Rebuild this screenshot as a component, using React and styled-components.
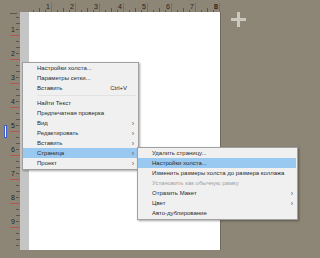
import React from 'react';
import styled, { createGlobalStyle } from 'styled-components';

const GlobalStyle = createGlobalStyle`
  html, body {
    margin: 0;
    padding: 0;
    background: #8d8676;
    overflow: hidden;
  }
`;

const Workspace = styled.div`
  position: relative;
  width: 320px;
  height: 258px;
  display: grid;
  grid-template-columns: 20px 200px 1fr;
  grid-template-rows: 12px 238px 1fr;
  background: #8d8676;
  font-family: 'Liberation Sans', Arial, sans-serif;
`;

const Corner = styled.div``;

const RulerSvg = styled.svg`
  display: block;
`;

const Page = styled.div`
  display: flex;
  box-shadow: 1px 0 0 rgba(60, 55, 45, 0.35);
`;

const PageGutter = styled.div`
  width: 9px;
  background: #c5c5c5;
`;

const PageSheet = styled.div`
  flex: 1;
  background: #ffffff;
`;

const Side = styled.div`
  padding: 0 0 0 11px;
`;

const Menu = styled.div`
  position: absolute;
  left: ${(p) => p.$left}px;
  top: ${(p) => p.$top}px;
  width: ${(p) => p.$width}px;
  box-sizing: border-box;
  background: #f0f0f0;
  border: 1px solid #a0a0a0;
  padding: 0 0 1px;
  box-shadow: 1px 1px 2px rgba(0, 0, 0, 0.35);
  font-size: 6px;
  color: #2a2a2a;
`;

const Item = styled.div`
  display: flex;
  align-items: center;
  height: 10px;
  margin: 0 1px 0 0;
  padding: 0 3px 0 14px;
  background: ${(p) => (p.$active ? '#99c8f1' : 'transparent')};
  color: ${(p) => (p.$disabled ? '#a0a0a0' : '#2a2a2a')};
  white-space: nowrap;
`;

const Label = styled.span`
  flex: 1;
`;

const Shortcut = styled.span`
  margin-right: 2px;
`;

const Arrow = styled.span`
  width: 5px;
  text-align: right;
  font-size: 7px;
  line-height: 7px;
  color: #555;
`;

const Separator = styled.div`
  height: 1px;
  margin: 2px 2px 2px 14px;
  background: #e2e2e2;
`;

const TopRuler = () => {
  const origin = 7;
  const ticks = [];
  for (let k = 1; k * 6 + origin < 200; k++) {
    const x = origin + k * 6;
    const major = k % 4 === 0;
    if (major) {
      ticks.push(<line key={'t' + k} x1={x + 0.5} y1={3} x2={x + 0.5} y2={12} stroke="#b4554f" />);
      ticks.push(
        <text key={'n' + k} x={x - 1} y={9} fontSize="7" textAnchor="end" fill="#262420" fontFamily="Liberation Sans, sans-serif">
          {k / 4}
        </text>
      );
    } else {
      const h = k % 2 === 0 ? 4 : 2;
      ticks.push(<line key={'t' + k} x1={x + 0.5} y1={12 - h} x2={x + 0.5} y2={12} stroke="#5b554a" />);
    }
  }
  return (
    <RulerSvg width="200" height="12" viewBox="0 0 200 12">
      {ticks}
      <text x="198" y="9" fontSize="7" textAnchor="end" fill="#262420" fontFamily="Liberation Sans, sans-serif">8</text>
    </RulerSvg>
  );
};

const LeftRuler = () => {
  const origin = -1;
  const ticks = [];
  for (let k = 1; k * 6 + origin < 238; k++) {
    const y = origin + k * 6;
    const major = k % 4 === 0;
    if (major) {
      ticks.push(<line key={'t' + k} x1={10} y1={y + 0.5} x2={20} y2={y + 0.5} stroke="#b4554f" />);
      ticks.push(
        <text key={'n' + k} x={15} y={y - 3} fontSize="7" textAnchor="end" fill="#262420" fontFamily="Liberation Sans, sans-serif">
          {k / 4}
        </text>
      );
    } else {
      const w = k % 2 === 0 ? 4 : 3;
      ticks.push(<line key={'t' + k} x1={16} y1={y + 0.5} x2={16 + w} y2={y + 0.5} stroke="#5b554a" />);
    }
  }
  return (
    <RulerSvg width="20" height="238" viewBox="0 0 20 238">
      <line x1="10" y1="1.5" x2="17" y2="1.5" stroke="#5b554a" />
      {ticks}
      <rect x="4.5" y="113.5" width="2" height="12" fill="#ffffff" stroke="#3d5cc8" />
    </RulerSvg>
  );
};

const PlusIcon = () => (
  <svg width="15" height="15" viewBox="0 0 15 15">
    <rect x="6" y="0" width="3" height="15" fill="#cdc8bf" />
    <rect x="0" y="6" width="15" height="3" fill="#cdc8bf" />
  </svg>
);

const mainMenu = [
  { label: 'Настройки холста...' },
  { label: 'Параметры сетки...' },
  { label: 'Вставить', shortcut: 'Ctrl+V' },
  { sep: true },
  { label: 'Найти Текст' },
  { label: 'Предпечатная проверка' },
  { label: 'Вид', sub: true },
  { label: 'Редактировать', sub: true },
  { label: 'Вставить', sub: true },
  { label: 'Страница', sub: true, active: true },
  { label: 'Проект', sub: true },
];

const pageMenu = [
  { label: 'Удалить страницу...' },
  { label: 'Настройки холста...', active: true },
  { label: 'Изменить размеры холста до размера коллажа' },
  { label: 'Установить как обычную рамку', disabled: true },
  { label: 'Отразить Макет', sub: true },
  { label: 'Цвет', sub: true },
  { label: 'Авто-дублирование' },
];

const renderItems = (items) =>
  items.map((it, i) =>
    it.sep ? (
      <Separator key={i} />
    ) : (
      <Item key={i} $active={it.active} $disabled={it.disabled}>
        <Label>{it.label}</Label>
        {it.shortcut && <Shortcut>{it.shortcut}</Shortcut>}
        <Arrow>{it.sub ? '›' : ''}</Arrow>
      </Item>
    )
  );

const App = () => (
  <>
    <GlobalStyle />
    <Workspace>
      <Corner />
      <TopRuler />
      <Corner />
      <LeftRuler />
      <Page>
        <PageGutter />
        <PageSheet />
      </Page>
      <Side>
        <PlusIcon />
      </Side>
      <Menu $left={22} $top={62} $width={117}>
        {renderItems(mainMenu)}
      </Menu>
      <Menu $left={137} $top={147} $width={161}>
        {renderItems(pageMenu)}
      </Menu>
    </Workspace>
  </>
);

export default App;
